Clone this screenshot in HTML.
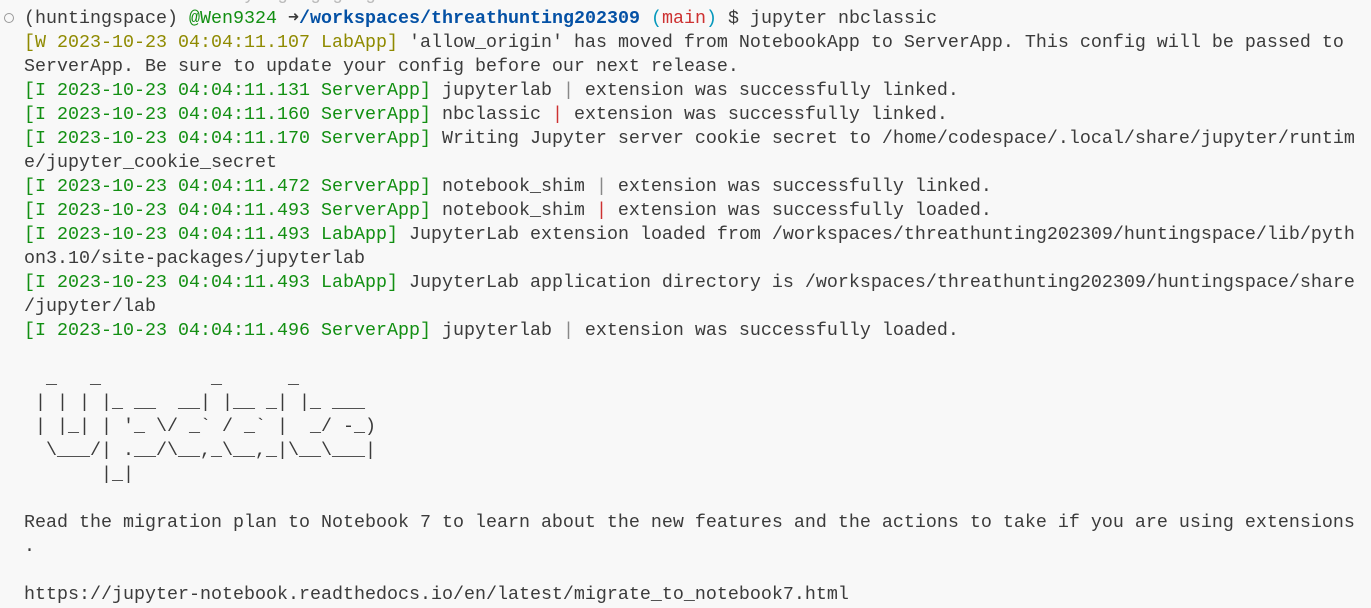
<!DOCTYPE html>
<html><head><meta charset="utf-8"><style>
html,body{margin:0;padding:0;background:#f8f8f8;width:1371px;height:608px;overflow:hidden}
.t{position:absolute;left:24px;top:-17px;font-family:"Liberation Mono",monospace;font-size:18.33px;line-height:24px;color:#3b3b3b;white-space:pre}
.g{color:#128f12}.y{color:#8f8a00}.b{color:#0451a5;font-weight:bold}.c{color:#0598bc}.r{color:#cd3131}.gr{color:#128f12}
.circ{position:absolute;left:4px;top:13px;width:8px;height:8px;border:1.5px solid #999;border-radius:50%}
</style></head><body>
<div class="circ"></div>
<div class="t"><span style="color:#bbb">                   ly  ging ging</span>
(huntingspace) <span class="gr">@Wen9324</span> <b>➜</b><span class="b">/workspaces/threathunting202309</span> <span class="c">(</span><span class="r">main</span><span class="c">)</span> $ jupyter nbclassic
<span class="y">[W 2023-10-23 04:04:11.107 LabApp]</span> 'allow_origin' has moved from NotebookApp to ServerApp. This config will be passed to
ServerApp. Be sure to update your config before our next release.
<span class="g">[I 2023-10-23 04:04:11.131 ServerApp]</span> jupyterlab <span style="color:#888">|</span> extension was successfully linked.
<span class="g">[I 2023-10-23 04:04:11.160 ServerApp]</span> nbclassic <span class="r">|</span> extension was successfully linked.
<span class="g">[I 2023-10-23 04:04:11.170 ServerApp]</span> Writing Jupyter server cookie secret to /home/codespace/.local/share/jupyter/runtim
e/jupyter_cookie_secret
<span class="g">[I 2023-10-23 04:04:11.472 ServerApp]</span> notebook_shim <span style="color:#888">|</span> extension was successfully linked.
<span class="g">[I 2023-10-23 04:04:11.493 ServerApp]</span> notebook_shim <span class="r">|</span> extension was successfully loaded.
<span class="g">[I 2023-10-23 04:04:11.493 LabApp]</span> JupyterLab extension loaded from /workspaces/threathunting202309/huntingspace/lib/pyth
on3.10/site-packages/jupyterlab
<span class="g">[I 2023-10-23 04:04:11.493 LabApp]</span> JupyterLab application directory is /workspaces/threathunting202309/huntingspace/share
/jupyter/lab
<span class="g">[I 2023-10-23 04:04:11.496 ServerApp]</span> jupyterlab <span style="color:#888">|</span> extension was successfully loaded.

  _   _          _      _
 | | | |_ __  __| |__ _| |_ ___
 | |_| | '_ \/ _` / _` |  _/ -_)
  \___/| .__/\__,_\__,_|\__\___|
       |_|

Read the migration plan to Notebook 7 to learn about the new features and the actions to take if you are using extensions
.

https://jupyter-notebook.readthedocs.io/en/latest/migrate_to_notebook7.html
</div>
</body></html>
